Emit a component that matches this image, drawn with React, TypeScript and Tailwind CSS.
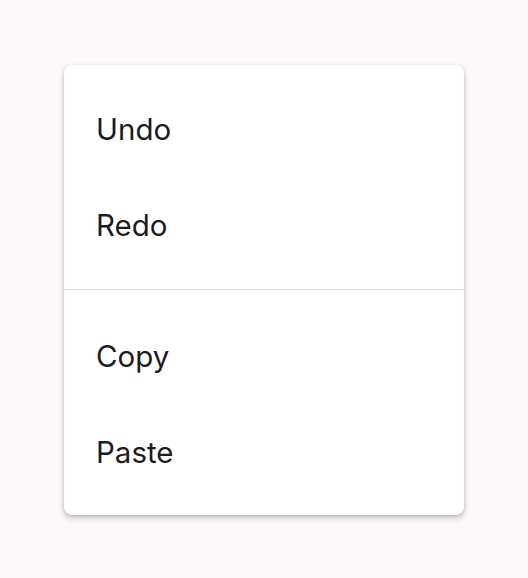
import React from 'react';

const groups: string[][] = [
  ['Undo', 'Redo'],
  ['Copy', 'Paste'],
];

const App: React.FC = () => {
  return (
    <div className="min-h-screen w-full bg-[#fef8fd] pt-[65px] pl-[64px]" style={{ fontFamily: 'Inter, sans-serif' }}>
      <div className="w-[400px] rounded-lg bg-white pt-4 pb-[15px] shadow-[0_3px_6px_rgba(0,0,0,0.22),0_1px_3px_rgba(0,0,0,0.12)]">
        {groups.map((items, gi) => (
          <React.Fragment key={gi}>
            {gi > 0 && <div className="mt-4 mb-[18px] h-px bg-[#dcdcdc]" />}
            {items.map(label => (
              <div key={label} className="flex h-24 items-center px-8 text-[29.5px] text-[#1d1b20]">
                {label}
              </div>
            ))}
          </React.Fragment>
        ))}
      </div>
    </div>
  );
};

export default App;
